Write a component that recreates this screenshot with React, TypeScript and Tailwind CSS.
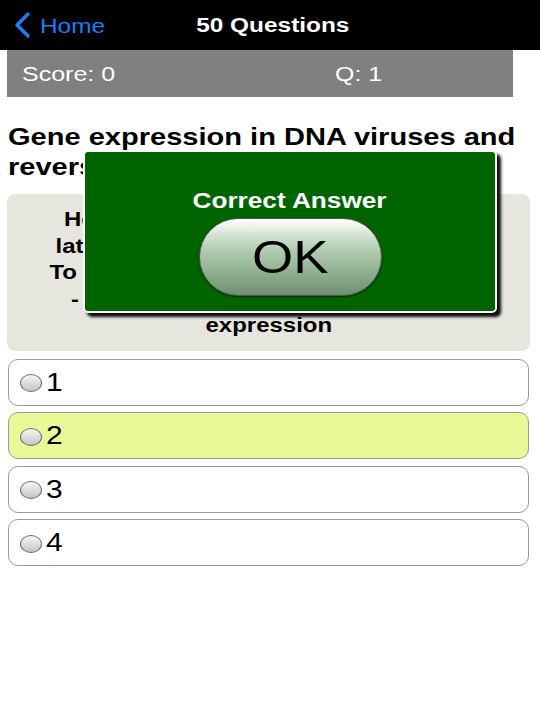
import React from "react";

const Radio = () => (
  <span className="inline-block w-[22px] h-[18px] rounded-[50%] border border-[#6b6b6b] bg-[linear-gradient(to_bottom,#f6f6f6,#c4c4c4)] mr-[4px] mt-[2px] shrink-0" />
);

export default function App() {
  const options = ["1", "2", "3", "4"];
  const qLines = [
    "How do DNA viruses switch early to",
    "late gene expression during infection",
    "To activate transcription of viral genes",
    "- Regulation of the temporal genes",
    "expression",
  ];
  return (
    <div className="relative w-[540px] h-[720px] bg-white overflow-hidden" style={{ fontFamily: '"Liberation Sans", Arial, sans-serif' }}>
      {/* Header */}
      <div className="relative h-[50px] bg-black flex items-center">
        <div className="flex items-center pl-[12px] text-[#1a7ff8]">
          <svg width="20" height="28" viewBox="0 0 20 28" className="mr-[8px]">
            <polyline points="16,3 5,14 16,25" fill="none" stroke="#1a7ff8" strokeWidth="3.4" strokeLinecap="round" strokeLinejoin="round" />
          </svg>
          <span className="inline-block origin-left scale-x-[1.16] text-[21px] leading-none">Home</span>
        </div>
        <div className="absolute left-0 right-0 top-0 h-[50px] flex items-center justify-center pl-[5px] text-white font-bold text-[20px]">
          <span className="inline-block scale-x-[1.22]">50 Questions</span>
        </div>
      </div>

      {/* Score bar */}
      <div className="mx-[7px] w-[506px] h-[47px] bg-[#808080] flex items-center text-white text-[20px]">
        <span className="pl-[15px] w-[328px]">
          <span className="inline-block origin-left scale-x-[1.25]">Score: 0</span>
        </span>
        <span className="inline-block origin-left scale-x-[1.25]">Q: 1</span>
      </div>

      {/* Title */}
      <div className="px-[8px] pt-[25px] font-bold text-[24px] leading-[30px] text-black whitespace-nowrap">
        <div className="origin-left scale-x-[1.21]">Gene expression in DNA viruses and</div>
        <div className="origin-left scale-x-[1.21]">reverse transcribing viruses</div>
      </div>

      {/* Question box */}
      <div className="mt-[12px] ml-[7px] w-[523px] rounded-[8px] bg-[#e6e6df] py-[12px] text-center font-bold text-[20px] leading-[26.5px] text-black">
        {qLines.map((l) => (
          <div key={l} className="whitespace-nowrap">
            <span className="inline-block scale-x-[1.2]">{l}</span>
          </div>
        ))}
      </div>

      {/* Options */}
      <div className="mt-[8px] ml-[8px] w-[521px] flex flex-col gap-[6.5px]">
        {options.map((o) => (
          <div
            key={o}
            className={`h-[47px] rounded-[10px] border border-[#9a9a9a] flex items-center pl-[11px] text-[25px] text-black ${o === "2" ? "bg-[#e8fa98]" : "bg-white"}`}
          >
            <Radio />
            <span className="inline-block origin-left scale-x-[1.2] leading-none">{o}</span>
          </div>
        ))}
      </div>

      {/* Popup */}
      <div className="absolute left-[83px] top-[150px] w-[414px] h-[163px] rounded-[5px] border-2 border-white bg-[#006400] shadow-[4px_4px_3px_rgba(0,0,0,0.95)] flex flex-col items-center">
        <div className="mt-[38px] text-white font-bold text-[22px] leading-none">
          <span className="inline-block scale-x-[1.19]">Correct Answer</span>
        </div>
        <div className="mt-[6px] w-[183px] h-[78px] rounded-full border border-[#555] bg-[linear-gradient(to_bottom,#ffffff_0%,#b8d2b8_35%,#8aaa8a_75%,#6f8f6f_100%)] shadow-[0_1px_2px_rgba(0,0,0,0.6)] flex items-center justify-center">
          <span className="inline-block scale-x-[1.15] text-[46px] leading-none text-black">OK</span>
        </div>
      </div>
    </div>
  );
}
